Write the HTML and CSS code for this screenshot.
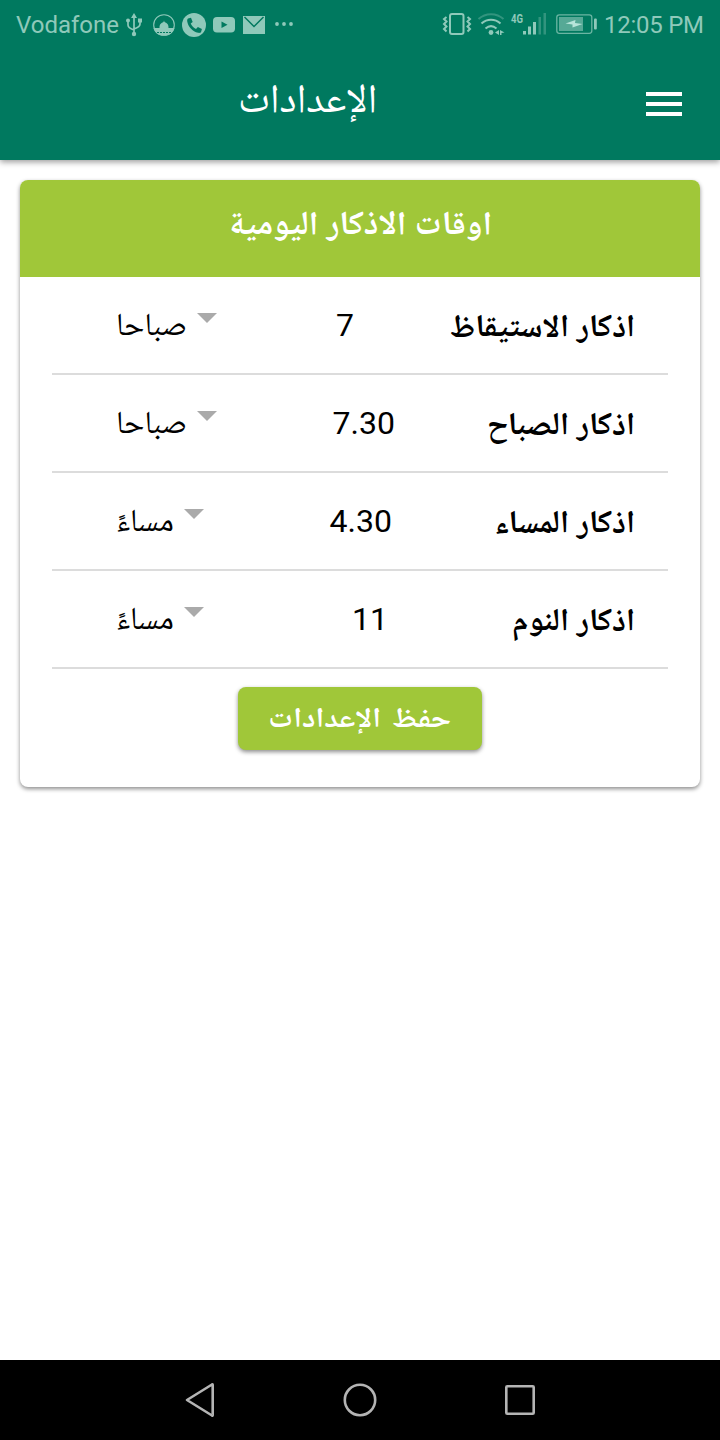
FILE: index.html
```html
<!DOCTYPE html>
<html lang="ar">
<head>
<meta charset="utf-8">
<title>الإعدادات</title>
<link rel="stylesheet" href="styles.css">
</head>
<body>
<div class="screen">
  <div class="status">
    <span class="clock">Vodafone</span>
    <svg class="icons-left" width="176" height="50" viewBox="120 0 176 50">
      <g fill="none" stroke="#8fc9ba" stroke-width="1.7">
        <path d="M134 34V16M128 20v5q0 3 6 5M140 20v4q0 3-6 5"/>
      </g>
      <g fill="#8fc9ba">
        <path d="M134 13l-3 5h6z"/><circle cx="134" cy="34" r="2.2"/><circle cx="128" cy="20.500" r="2"/><path d="M138 18.500h4v4h-4z"/>
      </g>
      <circle cx="164" cy="25" r="10.300" fill="none" stroke="#8fc9ba" stroke-width="1.100"/>
      <path fill="#8fc9ba" d="M153.500 28h6c-.3-3 1-5 4-6l.5-1.500.5 1.500c3 1 4.300 3 4 6h6c-1 5-5 7.500-10.500 7.500s-9.500-2.500-10.500-7.500z"/>
      <path d="M157 32.500h14" stroke="#00795f" stroke-width="1.200" stroke-dasharray="2 1"/>
      <circle cx="194" cy="25" r="12" fill="#8fc9ba"/>
      <path fill="#00795f" d="M188 18.500l3-.8 1.700 4.200-2 1.700c1.200 2.600 2.900 4.300 5.300 5.400l1.900-2 4 2-.8 3c-.6 1-2 1-3 .8-5.700-1.400-10-6-10.900-11.600-.1-1 .1-2.300.8-2.700z"/>
      <rect x="213" y="17" width="22" height="15.500" rx="4" fill="#8fc9ba"/>
      <path fill="#00795f" d="M221.500 21.500v6.500l6-3.250z"/>
      <rect x="243" y="16" width="22" height="18" fill="#8fc9ba"/>
      <path d="M244.500 17l9.500 9.500 9.500-9.500" fill="none" stroke="#00795f" stroke-width="1.500"/>
      <g fill="#8fc9ba"><circle cx="277" cy="24" r="1.900"/><circle cx="284" cy="24" r="1.900"/><circle cx="291" cy="24" r="1.900"/></g>
    </svg>
    <svg class="icons-right" width="164" height="50" viewBox="440 0 164 50">
      <g fill="none" stroke="#8fc9ba" stroke-width="2">
        <rect x="450" y="14" width="13.500" height="20" rx="2"/>
        <path d="M446.500 17l-2.500 2 2.500 2.500-2.500 2.500 2.500 2.500-2.500 2.500 2.500 2.500M467.500 17l2.500 2-2.500 2.500 2.500 2.500-2.500 2.500 2.500 2.500-2.500 2.500"/>
        <path d="M478.500 19c7-6.500 18-6.500 25 0" opacity=".35"/>
        <path d="M481.500 23.500c5.500-5 13.500-5 19 0M485.500 28.500c3.500-3 7.500-3 11 0"/>
      </g>
      <g fill="#8fc9ba">
        <circle cx="491" cy="32.500" r="2.400"/><path d="M495 32.500l4-2.500v5zM500 30v5h1.500v-2l3-.5z"/>
        <text class="network" x="511" y="23" textLength="12" lengthAdjust="spacingAndGlyphs">4G</text>
        <rect x="523" y="31" width="3" height="3.500"/><rect x="528" y="26.500" width="3" height="8"/><rect x="533" y="22" width="3" height="12.500"/>
        <rect x="538.500" y="17" width="2.500" height="17.500" opacity=".35"/><rect x="543.500" y="13" width="2.500" height="21.500" opacity=".35"/>
        <rect x="559" y="17" width="24" height="14" opacity=".6"/><rect x="594" y="18.500" width="2.800" height="11" rx="1"/>
      </g>
      <rect x="556.800" y="14.800" width="35" height="18.500" rx="2.500" fill="none" stroke="#8fc9ba" stroke-width="1.300" opacity=".75"/>
      <path fill="#b7e5da" d="M565.500 23.500l10-3.500-.5 3 7.500 1-10 3.500v-3z"/>
    </svg>
    <span class="clock now">12:05 PM</span>
  </div>
  <header class="toolbar">
    <h1 class="title" dir="rtl"><span>الإعدادات</span></h1>
    <div class="menu"><i></i><i></i><i></i></div>
  </header>
  <main class="page">
    <section class="card">
      <h2 class="card-head" dir="rtl"><span>اوقات الاذكار اليومية</span></h2>
      <div class="rows" dir="rtl">
        <div class="row"><span class="label">اذكار الاستيقاظ</span><span class="time t1">7</span><span class="period">صباحا</span><i class="caret"></i></div>
        <div class="row"><span class="label">اذكار الصباح</span><span class="time t2">7.30</span><span class="period">صباحا</span><i class="caret"></i></div>
        <div class="row"><span class="label">اذكار المساء</span><span class="time t3">4.30</span><span class="period">مساءً</span><i class="caret"></i></div>
        <div class="row"><span class="label">اذكار النوم</span><span class="time t4">11</span><span class="period">مساءً</span><i class="caret"></i></div>
      </div>
      <button class="save" dir="rtl"><span class="save-text">حفظ الإعدادات</span></button>
    </section>
  </main>
  <nav class="navbar">
    <svg width="400" height="80" viewBox="160 0 400 80" fill="none" stroke="#b4b4b4" stroke-width="2.600" stroke-linejoin="round">
      <path d="M187 40l25-15.500q.7-.4.700.5v30q0 .9-.7.500z"/><circle cx="360" cy="40" r="15.200"/><rect x="506.300" y="26.300" width="27.400" height="27.400" rx="1"/>
    </svg>
  </nav>
</div>
</body>
</html>
```
FILE: styles.css
```css
* { box-sizing: border-box; }
body { margin: 0; background: #fff; font-family: Roboto, "Noto Naskh Arabic UI", "Noto Naskh Arabic", "DejaVu Sans", sans-serif; color: #000; }
.screen { display: flex; flex-direction: column; width: 720px; height: 1440px; overflow: hidden; }
.status { display: flex; align-items: center; height: 50px; padding-left: 16px; padding-right: 16px; background: #00795f; flex: none; position: relative; z-index: 1; }
.clock { font-size: 24px; color: #8fc9ba; white-space: nowrap; width: 103px; }
.now { width: 100px; letter-spacing: -.25px; }
.icons-left { margin-left: 1px; flex: none; }
.icons-right { margin-left: auto; flex: none; }
.network { font: 700 13px Roboto, sans-serif; }
.toolbar { display: flex; justify-content: space-between; height: 110px; padding: 0 38px 0 238px; background: #00795f; box-shadow: 0 2px 6px rgba(0,0,0,.4); color: #fff; flex: none; }
.title { margin: 32px 0 0; font-size: 41px; line-height: 44px; font-weight: 400; white-space: nowrap; }
.menu { display: flex; flex-direction: column; gap: 6px; margin-top: 42px; }
.menu i { width: 36px; height: 4px; background: #fff; }
.page { flex: 1; padding: 20px; }
.card { display: flex; flex-direction: column; height: 607px; border-radius: 8px; box-shadow: 0 2px 4px rgba(0,0,0,.45); overflow: hidden; }
.card-head { margin: 0; height: 97px; padding-top: 28px; background: #a0c739; color: #fff; text-align: center; font-size: 33.6px; line-height: 40px; flex: none; }
.rows { padding: 0 32px; }
.row { display: flex; height: 98px; padding: 0 33px 0 64px; border-bottom: 2px solid #dcdcdc; white-space: nowrap; align-items: flex-start; }
.label { width: 220px; font-size: 31.800px; line-height: 40px; font-weight: 700; padding-top: 33px; flex: none; }
.time { direction: ltr; flex: 1; font-size: 32px; line-height: 40px; padding-top: 28px; }
.t1 { text-align: right; padding-right: 61px; }
.t2 { text-align: right; padding-right: 20px; }
.t3 { text-align: right; padding-right: 23px; }
.t4 { text-align: right; padding-right: 27px; }
.period { order: 2; font-size: 32px; line-height: 40px; padding-top: 31px; }
.caret { order: 1; margin: 36px 0 0 10px; border: 10px solid transparent; border-top-color: #aaa; border-bottom: 0; }
.save { align-self: center; width: 244px; height: 63px; margin-top: 18px; padding: 2px 0 0; border: 0; border-radius: 8px; background: #a0c739; color: #fff; font-family: "Noto Naskh Arabic UI", "Noto Naskh Arabic", "DejaVu Sans", sans-serif; font-weight: 700; font-size: 28px; word-spacing: 4px; box-shadow: 0 2px 4px rgba(0,0,0,.45); white-space: nowrap; }
.save-text { display: inline-block; transform: scaleX(1.105); }
.navbar { display: flex; justify-content: center; height: 80px; background: #000; flex: none; }
```
